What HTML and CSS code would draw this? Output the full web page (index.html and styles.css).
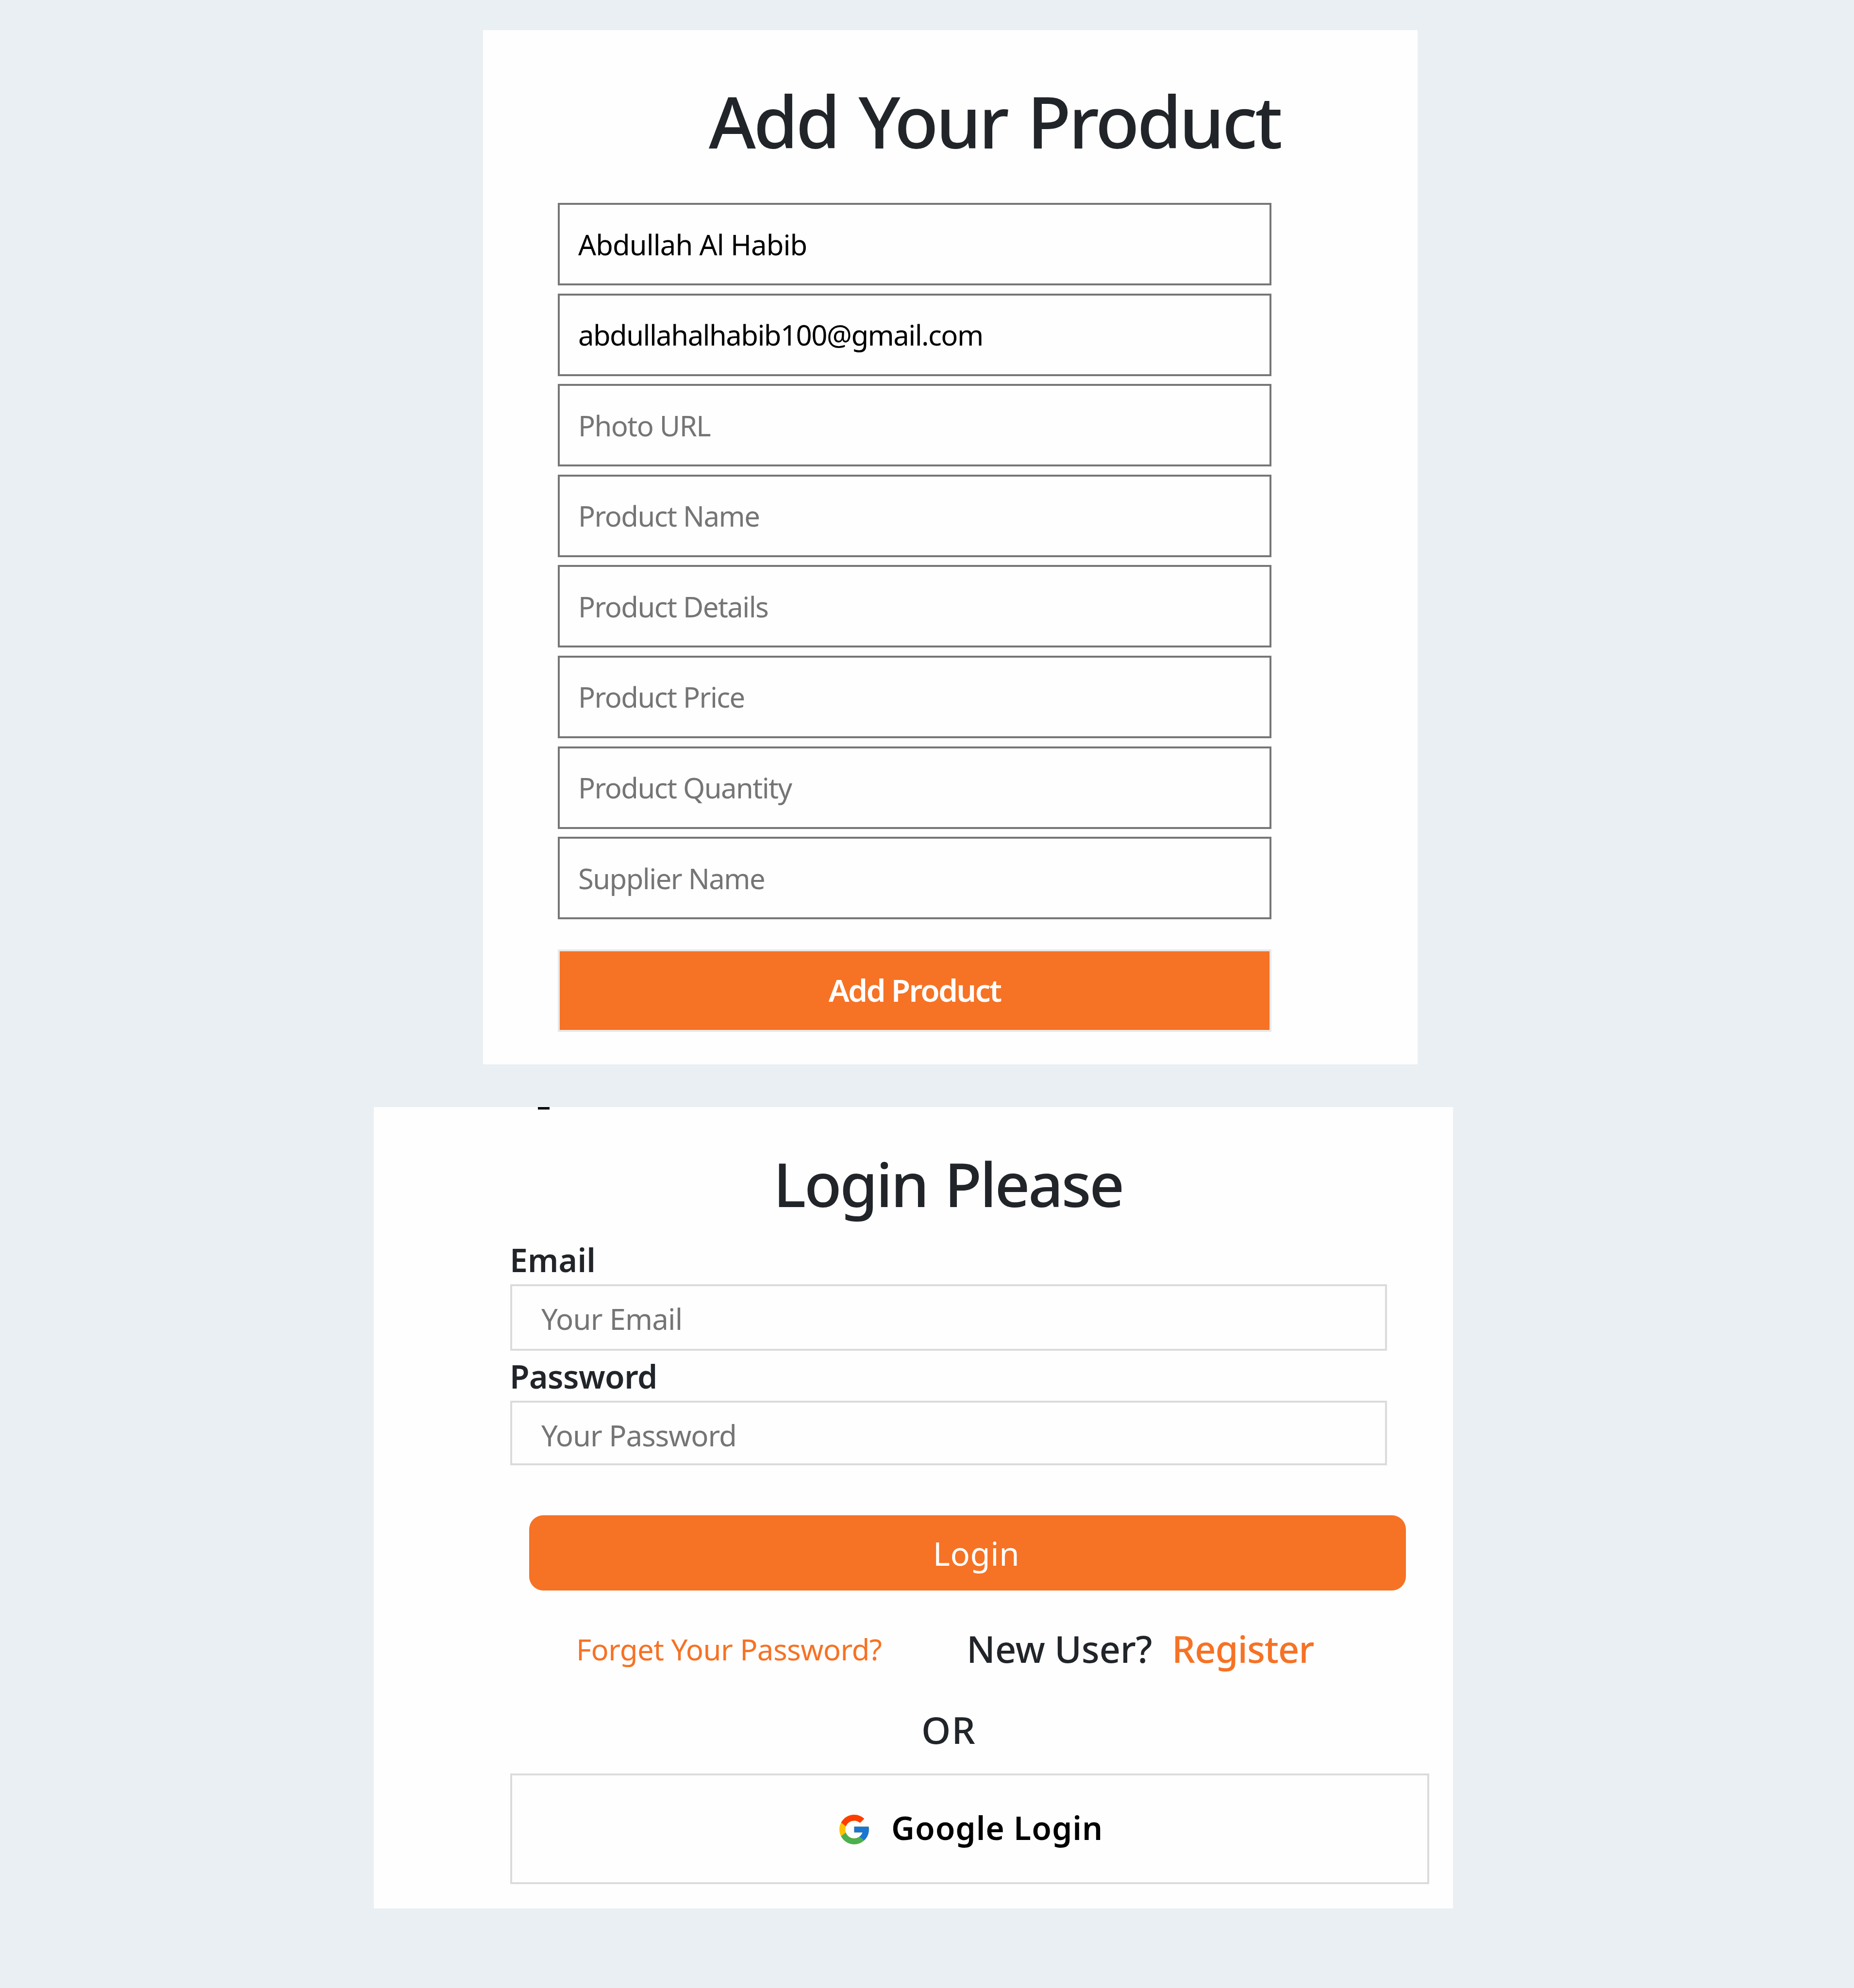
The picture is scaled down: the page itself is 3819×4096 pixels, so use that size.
FILE: index.html
```
<!DOCTYPE html>
<html lang="en">
<head>
  <meta charset="utf-8">
  <title>Add Your Product</title>
  <link rel="stylesheet" href="styles.css">
</head>
<body>
  <main class="page">
    <section class="card product">
      <h1 class="product-title">Add Your Product</h1>
      <form class="product-form">
        <input class="field field-name" type="text" value="Abdullah Al Habib">
        <input class="field" type="text" value="abdullahalhabib100@gmail.com">
        <input class="field" type="text" placeholder="Photo URL">
        <input class="field" type="text" placeholder="Product Name">
        <input class="field" type="text" placeholder="Product Details">
        <input class="field" type="text" placeholder="Product Price">
        <input class="field" type="text" placeholder="Product Quantity">
        <input class="field" type="text" placeholder="Supplier Name">
        <button class="add-button" type="button">Add Product</button>
      </form>
    </section>

    <section class="card login">
      <span class="clipped-mark"></span>
      <h2 class="login-title">Login Please</h2>
      <label class="label label-email" for="email">Email</label>
      <input class="login-field login-email" id="email" type="text" placeholder="Your Email">
      <label class="label label-password" for="password">Password</label>
      <input class="login-field login-password" id="password" type="text" placeholder="Your Password">
      <button class="login-button" type="button">Login</button>
      <div class="links">
        <a class="forget">Forget Your Password?</a>
        <span class="new-user">New User?</span>
        <a class="register">Register</a>
      </div>
      <p class="or">OR</p>
      <button class="google-button" type="button">
        <svg class="google-icon" viewBox="0 0 48 48" aria-hidden="true">
          <path fill="#FFC107" d="M43.611,20.083H42V20H24v8h11.303c-1.649,4.657-6.08,8-11.303,8c-6.627,0-12-5.373-12-12c0-6.627,5.373-12,12-12c3.059,0,5.842,1.154,7.961,3.039l5.657-5.657C34.046,6.053,29.268,4,24,4C12.955,4,4,12.955,4,24c0,11.045,8.955,20,20,20c11.045,0,20-8.955,20-20C44,22.659,43.862,21.35,43.611,20.083z"/>
          <path fill="#FF3D00" d="M6.306,14.691l6.571,4.819C14.655,15.108,18.961,12,24,12c3.059,0,5.842,1.154,7.961,3.039l5.657-5.657C34.046,6.053,29.268,4,24,4C16.318,4,9.656,8.337,6.306,14.691z"/>
          <path fill="#4CAF50" d="M24,44c5.166,0,9.86-1.977,13.409-5.192l-6.19-5.238C29.211,35.091,26.715,36,24,36c-5.202,0-9.619-3.317-11.283-7.946l-6.522,5.025C9.505,39.556,16.227,44,24,44z"/>
          <path fill="#1976D2" d="M43.611,20.083H42V20H24v8h11.303c-0.792,2.237-2.231,4.166-4.087,5.571c0.001-0.001,0.002-0.001,0.003-0.002l6.19,5.238C36.971,39.205,44,34,44,24C44,22.659,43.862,21.35,43.611,20.083z"/>
        </svg>
        <span class="google-text">Google Login</span>
      </button>
    </section>
  </main>
</body>
</html>
```
FILE: styles.css
```
* {
  box-sizing: border-box;
}

body {
  margin: 0;
  background: #eaeff3;
  color: #212529;
  font-family: "Noto Sans", "Open Sans", sans-serif;
}

.page {
  display: flex;
  flex-direction: column;
  align-items: flex-start;
  height: 4096px;
  padding-top: 62px;
}

.card {
  display: flex;
  flex-direction: column;
  align-items: flex-start;
  background: #fefefe;
}

h1, h2, p {
  margin: 0;
}

input, button {
  margin: 0;
  border-radius: 0;
  font-family: inherit;
  outline: none;
}

/* product card */
.product {
  width: 1925px;
  height: 2131px;
  margin-left: 995px;
  padding: 97px 0 0 154px;
}

.product-title {
  margin-left: 311px;
  font-size: 148px;
  font-weight: 500;
  line-height: 180px;
  letter-spacing: -4.7px;
  word-spacing: 8px;
  white-space: nowrap;
}

.product-form {
  display: flex;
  flex-direction: column;
  gap: 16.6px;
  width: 1470px;
  margin-top: 79px;
}

.field {
  width: 100%;
  height: 170px;
  padding: 0 38px;
  border: 4px solid #767676;
  background: transparent;
  color: #000;
  font-size: 58px;
  letter-spacing: -1.55px;
}

.field-name {
  letter-spacing: -0.9px;
}

.field::placeholder,
.login-field::placeholder {
  color: #757575;
  opacity: 1;
}

.add-button {
  height: 170px;
  margin-top: 45.4px;
  padding: 0 0 4px;
  border: 4px solid #e8e8e8;
  background: #f67225;
  color: #fff;
  font-size: 64px;
  font-weight: 600;
  letter-spacing: -2.7px;
}

/* login card */
.login {
  position: relative;
  width: 2223px;
  height: 1651px;
  margin: 88px 0 0 770px;
  padding: 82px 0 0 281px;
}

.clipped-mark {
  position: absolute;
  top: 0;
  left: 338px;
  width: 24px;
  height: 5px;
  background: #000;
}

.login-title {
  margin-left: 542px;
  font-size: 126px;
  font-weight: 500;
  line-height: 150px;
  letter-spacing: -3.6px;
  word-spacing: 6px;
}

.label {
  margin-left: -1px;
  font-size: 66px;
  font-weight: 600;
  line-height: 90px;
}

.label-email {
  margin-top: 37px;
  letter-spacing: 0.2px;
}

.label-password {
  margin-top: 7px;
  letter-spacing: -0.6px;
}

.login-field {
  width: 1806px;
  border: 4px solid #dbdbdb;
  background: transparent;
  color: #000;
  font-size: 60px;
  letter-spacing: -0.85px;
}

.login-email {
  height: 137px;
  margin-top: 6px;
  padding: 4px 60px 0;
}

.login-password {
  height: 133px;
  margin-top: 6px;
  padding: 8px 60px 0;
  letter-spacing: -1.1px;
}

.login-button {
  width: 1806px;
  height: 155px;
  margin: 103px 0 0 39px;
  padding: 0 0 0 36px;
  border: 0;
  border-radius: 29px;
  background: #f67225;
  color: #fff;
  font-size: 67px;
  letter-spacing: 0.6px;
}

.links {
  display: grid;
  grid-template-columns: 804px 423px auto;
  align-items: start;
  margin-top: 70px;
  padding-left: 136px;
  font-size: 76px;
  font-weight: 500;
  line-height: 100px;
  white-space: nowrap;
}

.new-user {
  letter-spacing: -0.3px;
}

.forget {
  margin-top: 2px;
  color: #f67225;
  font-size: 60px;
  font-weight: 400;
  line-height: 98px;
  letter-spacing: -0.6px;
}

.register {
  color: #f67225;
  letter-spacing: -1.1px;
}

.or {
  margin: 67px 0 0 847px;
  font-size: 77px;
  font-weight: 500;
  line-height: 100px;
  letter-spacing: 2px;
}

.google-button {
  display: flex;
  align-items: center;
  gap: 39px;
  width: 1893px;
  height: 228px;
  margin-top: 40px;
  padding: 0 0 0 667px;
  border: 4px solid #dbdbdb;
  background: transparent;
  color: #000;
  font-size: 66px;
  font-weight: 600;
  line-height: 90px;
  letter-spacing: 1px;
}

.google-icon {
  width: 75px;
  height: 73px;
  margin-top: 3px;
}

.google-text {
  margin-bottom: 6px;
}
```
